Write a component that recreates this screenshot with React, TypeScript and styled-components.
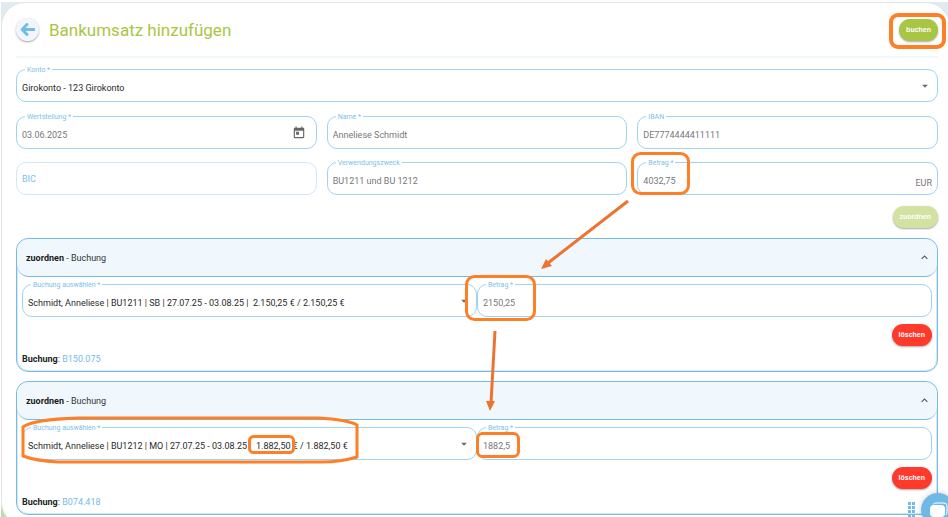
import React, { useId, useState } from "react";
import styled, { createGlobalStyle, css } from "styled-components";
import { MdArrowDropDown, MdExpandLess, MdToday } from "react-icons/md";

const blue = "#74bce6";
const line = "#9fd3f0";
const orange = "#ff7f27";

const GlobalStyle = createGlobalStyle`
  *, *::before, *::after { box-sizing: border-box; }
  body {
    margin: 0;
    background: #fff;
    color: #333;
    font: 9px/14px Roboto, "Liberation Sans", sans-serif;
  }
  input, select, button { font: inherit; }
`;

const Shell = styled.div`
  position: relative;
  height: 100vh;
  padding: 2px 0 0 1px;
  overflow: hidden;
`;

const Backdrop = styled.div`
  background: linear-gradient(to bottom, #e1eaf1 0, #e4e8e8 60%, #c3dab3 98%);
`;

const Card = styled.main`
  margin-right: -2px;
  padding: 0 11px 10px 14px;
  border: 1px solid #e0e6e6;
  border-radius: 24px;
  background: #fff;
`;

const Header = styled.header`
  display: flex;
  align-items: center;
  gap: 10px;
  height: 55px;
  border-bottom: 2px solid #f1f8fd;
`;

const BackButton = styled.button`
  display: grid;
  place-items: center;
  width: 23px;
  height: 23px;
  padding: 0;
  border: 0;
  border-radius: 50%;
  background: #f0f6fb;
  box-shadow: 0 1px 2px rgba(0, 0, 0, 0.35);
`;

const Title = styled.h1`
  flex: 1;
  margin: 0;
  color: #a9c63f;
  font: 400 17px/24px Roboto, sans-serif;
`;

const tones = { green: "#a8c543", pale: "#d3e1a1", red: "#ff3a2c" };

const PillButton = styled.button<{ $tone: keyof typeof tones }>`
  height: 22px;
  padding: 0 7px;
  border: 0;
  border-radius: 11px;
  background: ${(p) => tones[p.$tone]};
  box-shadow: 0 1px 2px rgba(0, 0, 0, 0.35);
  color: #fff;
  font: 700 7px/22px "Liberation Sans", sans-serif;
`;

const Form = styled.form`
  display: flex;
  flex-direction: column;
  gap: 14px;
  padding-top: 11px;
`;

const Columns = styled.div`
  display: grid;
  grid-template-columns: repeat(3, 1fr);
  gap: 13px 10px;
`;

const Pair = styled.div`
  display: grid;
  grid-template-columns: 1fr 1fr;
`;

const Actions = styled.div`
  display: flex;
  justify-content: flex-end;
`;

const AssignActions = styled(Actions)`
  padding-top: 11px;
`;

const FieldBox = styled.div<{ $empty?: boolean }>`
  position: relative;
  display: flex;
  align-items: center;
  height: 33px;
  padding: 0 5px;
  border: 1px solid ${(p) => (p.$empty ? "#d0e9f8" : line)};
  border-radius: 10px;
`;

const FieldLabel = styled.label`
  position: absolute;
  top: -5px;
  left: 8px;
  padding: 0 2px;
  background: #fff;
  color: #7dbfe8;
  font-size: 7px;
  line-height: 10px;
  white-space: pre;
`;

const control = css`
  flex: 1;
  min-width: 0;
  width: 100%;
  height: 31px;
  margin: 0;
  border: 0;
  outline: 0;
  background: transparent;
`;

const TextInput = styled.input`
  ${control}
  padding: 4px 0 0;
  color: #777;
  &::placeholder { color: #7dbfe8; opacity: 1; }
`;

const EmptyInput = styled(TextInput)`
  padding: 0;
`;

const SelectInput = styled.select`
  ${control}
  appearance: none;
  padding: 4px 0 0;
  color: #2a2a2a;
`;

const Arrow = styled.span`
  display: flex;
  color: #6b6b6b;
  pointer-events: none;
`;

const Suffix = styled.span`
  padding-top: 8px;
  color: #777;
`;

const IconButton = styled.button`
  display: flex;
  padding: 0;
  margin-right: 5px;
  border: 0;
  background: none;
  color: #666;
`;

const Panels = styled.div`
  display: flex;
  flex-direction: column;
  gap: 9px;
  margin-top: 10px;
`;

const Panel = styled.section`
  border: 1px solid ${blue};
  border-radius: 12px;
  box-shadow: inset 0 0 0 1px #d3eaf8;
`;

const PanelToggle = styled.button`
  display: flex;
  align-items: center;
  justify-content: space-between;
  width: 100%;
  height: 38px;
  padding: 0 6px 0 9px;
  border: 0;
  border-bottom: 1px solid ${blue};
  border-radius: 12px;
  background: #f0f7fd;
  color: #333;
  text-align: left;
  b { color: #1c1c1c; }
  svg { color: #555; }
`;

const PanelBody = styled.div`
  padding: 7px 5px 5px;
`;

const PanelActions = styled(Actions)`
  padding: 7px 0 6px;
`;

const Reference = styled.p`
  margin: 0;
  color: #222;
  a { color: ${blue}; text-decoration: none; }
`;

const Markup = styled.svg`
  position: absolute;
  top: 0;
  left: 0;
  pointer-events: none;
`;

const ChatDock = styled.div`
  position: absolute;
  right: -7px;
  bottom: -10px;
  display: flex;
  align-items: center;
  gap: 4px;
`;

const ChatButton = styled.button`
  display: grid;
  place-items: center;
  width: 34px;
  height: 34px;
  padding: 0;
  border: 0;
  border-radius: 50%;
  background: #70b9e4;
  box-shadow: 0 0 6px rgba(0, 0, 0, 0.2);
`;

type TextFieldProps = {
  label: string;
  value: string;
  suffix?: string;
  calendar?: boolean;
};

function TextField({ label, value, suffix, calendar }: TextFieldProps) {
  const id = useId();
  const [text, setText] = useState(value);
  return (
    <FieldBox>
      <FieldLabel htmlFor={id}>{label}</FieldLabel>
      <TextInput id={id} value={text} onChange={(e) => setText(e.target.value)} />
      {suffix && <Suffix>{suffix}</Suffix>}
      {calendar && (
        <IconButton type="button" aria-label="Kalender">
          <MdToday size={14} />
        </IconButton>
      )}
    </FieldBox>
  );
}

function SelectField({ label, value }: { label: string; value: string }) {
  const id = useId();
  return (
    <FieldBox>
      <FieldLabel htmlFor={id}>{label}</FieldLabel>
      <SelectInput id={id} defaultValue={value}>
        <option>{value}</option>
      </SelectInput>
      <Arrow>
        <MdArrowDropDown size={14} />
      </Arrow>
    </FieldBox>
  );
}

type Booking = { option: string; amount: string; reference: string };

const bookings: Booking[] = [
  {
    option: "Schmidt, Anneliese | BU1211 | SB | 27.07.25 - 03.08.25 |\u00a0 2.150,25 € / 2.150,25 €",
    amount: "2150,25",
    reference: "B150.075",
  },
  {
    option: "Schmidt, Anneliese | BU1212 | MO | 27.07.25 - 03.08.25 |\u00a0 1.882,50 € / 1.882,50 €",
    amount: "1882,5",
    reference: "B074.418",
  },
];

function BookingPanel({ option, amount, reference }: Booking) {
  const [open, setOpen] = useState(true);
  return (
    <Panel>
      <PanelToggle type="button" aria-expanded={open} onClick={() => setOpen(!open)}>
        <span>
          <b>zuordnen</b> - Buchung
        </span>
        <MdExpandLess size={13} />
      </PanelToggle>
      {open && (
        <PanelBody>
          <Pair>
            <SelectField label="Buchung auswählen *" value={option} />
            <TextField label="Betrag *" value={amount} />
          </Pair>
          <PanelActions>
            <PillButton type="button" $tone="red">löschen</PillButton>
          </PanelActions>
          <Reference>
            <b>Buchung</b>: <a href={`#${reference}`}>{reference}</a>
          </Reference>
        </PanelBody>
      )}
    </Panel>
  );
}

function Annotations() {
  return (
    <Markup width="948" height="517" fill="none" aria-hidden="true">
      <g stroke={orange} strokeWidth="4">
        <rect x="891" y="15" width="53" height="32" rx="7" />
      </g>
      <g stroke={orange} strokeWidth="3">
        <rect x="632.5" y="153.5" width="56" height="40" rx="8" />
        <rect x="466.5" y="276.5" width="68" height="43" rx="8" />
        <rect x="477.5" y="433.5" width="41" height="23" rx="5" />
        <rect x="249.5" y="436.5" width="44" height="16" rx="4" />
        <path d="M23 427C31 421 50 419 78 418H318C336 419 350 421 357 425V457C347 460 338 462 322 462H58C41 461 31 459 23 456Z" />
      </g>
      <g stroke="#ed7331" strokeWidth="3">
        <path d="M628 201L548 263" />
        <path d="M495 331L491 403" />
      </g>
      <path d="M541 269L546 259L552 266ZM490 411L486 401H495Z" fill="#ed7331" />
    </Markup>
  );
}

export default function App() {
  const bicId = useId();
  return (
    <Shell>
      <GlobalStyle />
      <Backdrop>
        <Card>
          <Header>
            <BackButton type="button" aria-label="Zurück">
              <svg width="15" height="13" viewBox="0 0 15 13" fill="none" stroke={blue} strokeWidth="3">
                <path d="M7 1.5L2.2 6.5L7 11.5M2.5 6.5H14" strokeLinejoin="round" strokeLinecap="round" />
              </svg>
            </BackButton>
            <Title>Bankumsatz hinzufügen</Title>
            <PillButton type="button" $tone="green">buchen</PillButton>
          </Header>
          <Form onSubmit={(e) => e.preventDefault()}>
            <SelectField label="Konto *" value="Girokonto - 123 Girokonto" />
            <Columns>
              <TextField label="Wertstellung *" value="03.06.2025" calendar />
              <TextField label="Name *" value="Anneliese Schmidt" />
              <TextField label="IBAN" value="DE7774444411111" />
              <FieldBox $empty>
                <EmptyInput id={bicId} aria-label="BIC" placeholder="BIC" />
              </FieldBox>
              <TextField label="Verwendungszweck" value="BU1211 und BU 1212" />
              <TextField label="Betrag *" value="4032,75" suffix="EUR" />
            </Columns>
          </Form>
          <AssignActions>
            <PillButton type="button" $tone="pale">zuordnen</PillButton>
          </AssignActions>
          <Panels>
            {bookings.map((b) => (
              <BookingPanel key={b.reference} {...b} />
            ))}
          </Panels>
        </Card>
      </Backdrop>
      <ChatDock>
        <svg width="10" height="18" viewBox="0 0 10 18" fill={blue} aria-hidden="true">
          {[1, 5, 9, 13].map((y) => (
            <path key={y} d={`M1 ${y}h3v3H1zM5 ${y}h3v3H5z`} />
          ))}
        </svg>
        <ChatButton type="button" aria-label="Chat">
          <svg width="19" height="17" viewBox="0 0 19 17" fill="none">
            <path d="M4 2.5Q5 1 7 1H15Q18 1 18 4V9Q18 12 17 13" stroke="#fff" />
            <rect x="1" y="3" width="15" height="12" rx="4" fill="#fff" />
          </svg>
        </ChatButton>
      </ChatDock>
      <Annotations />
    </Shell>
  );
}
